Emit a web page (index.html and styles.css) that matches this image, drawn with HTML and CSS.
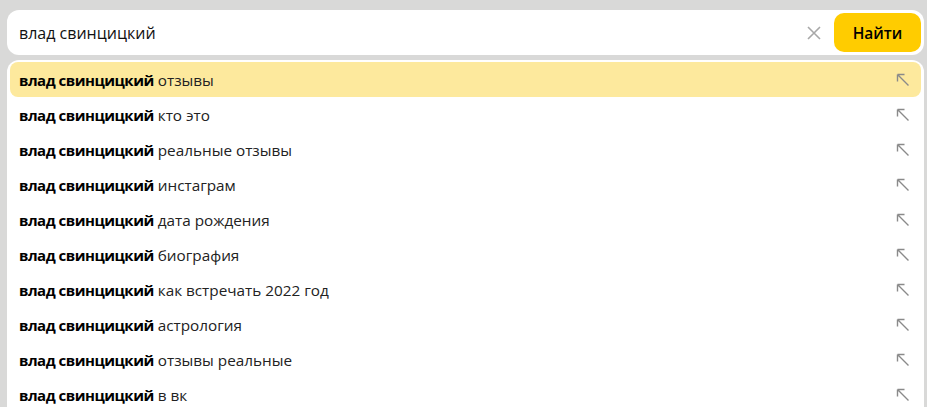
FILE: index.html
```html
<!DOCTYPE html>
<html lang="ru">
    <head>
        <meta charset="UTF-8" />
        <meta name="viewport" content="width=device-width, initial-scale=1.0" />
        <title>влад свинцицкий</title>
        <link rel="stylesheet" href="styles.css">
    </head>
    <body>
        <svg class="defs" width="0" height="0">
            <symbol id="ne" viewBox="0 0 14 14"><path d="M1.5 1.5L12.5 12.5M1.5 1.5H8.5M1.5 1.5V8.5" stroke="#8a8a8a" stroke-width="1.4" fill="none"/></symbol>
        </svg>
        <div class="search">
            <form class="bar">
                <span class="query">влад свинцицкий</span>
                <span class="clear">
                    <svg width="16" height="16" viewBox="0 0 16 16"><path d="M2 2L14 14M14 2L2 14" stroke="#a8a8a8" stroke-width="1.6" fill="none"/></svg>
                </span>
                <button class="find" type="button">Найти</button>
            </form>
            <ul class="suggest">
                <li class="item active"><span><b>влад свинцицкий</b> отзывы</span><svg class="arrow"><use href="#ne"/></svg></li>
                <li class="item"><span><b>влад свинцицкий</b> кто это</span><svg class="arrow"><use href="#ne"/></svg></li>
                <li class="item"><span><b>влад свинцицкий</b> реальные отзывы</span><svg class="arrow"><use href="#ne"/></svg></li>
                <li class="item"><span><b>влад свинцицкий</b> инстаграм</span><svg class="arrow"><use href="#ne"/></svg></li>
                <li class="item"><span><b>влад свинцицкий</b> дата рождения</span><svg class="arrow"><use href="#ne"/></svg></li>
                <li class="item"><span><b>влад свинцицкий</b> биография</span><svg class="arrow"><use href="#ne"/></svg></li>
                <li class="item"><span><b>влад свинцицкий</b> как встречать 2022 год</span><svg class="arrow"><use href="#ne"/></svg></li>
                <li class="item"><span><b>влад свинцицкий</b> астрология</span><svg class="arrow"><use href="#ne"/></svg></li>
                <li class="item"><span><b>влад свинцицкий</b> отзывы реальные</span><svg class="arrow"><use href="#ne"/></svg></li>
                <li class="item"><span><b>влад свинцицкий</b> в вк</span><svg class="arrow"><use href="#ne"/></svg></li>
            </ul>
        </div>
    </body>
</html>
```
FILE: styles.css
```css
* {
    margin: 0;
    padding: 0;
    box-sizing: border-box;
}
body {
    background: #d9d9d8;
    font-family: "Open Sans", "Noto Sans", sans-serif;
    color: #000;
    overflow: hidden;
}
.defs {
    position: absolute;
}
.search {
    width: 917px;
    margin: 10px 0 0 7px;
}
.bar {
    height: 45px;
    background: #fff;
    border-radius: 12px;
    padding: 3px;
    display: flex;
    align-items: center;
}
.query {
    flex: 1;
    padding-left: 9px;
    font-size: 16px;
    color: #111;
}
.clear {
    width: 40px;
    display: flex;
    justify-content: center;
}
.find {
    width: 87px;
    height: 39px;
    border: 0;
    border-radius: 10px;
    background: #fc0;
    font-family: inherit;
    font-size: 15.5px;
    font-weight: 600;
    color: #000;
}
.suggest {
    list-style: none;
    margin-top: 5px;
    background: #fff;
    border-radius: 12px 12px 0 0;
    padding: 2px 3px;
}
.item {
    height: 35px;
    display: flex;
    align-items: center;
    justify-content: space-between;
    padding: 0 11px 0 9px;
    border-radius: 8px;
    font-size: 15.3px;
    color: #222;
}
.item b {
    font-size: 15px;
    font-weight: 700;
    letter-spacing: -0.5px;
    color: #000;
}
.item.active {
    background: #fde99d;
}
.arrow {
    width: 14px;
    height: 14px;
}
```
